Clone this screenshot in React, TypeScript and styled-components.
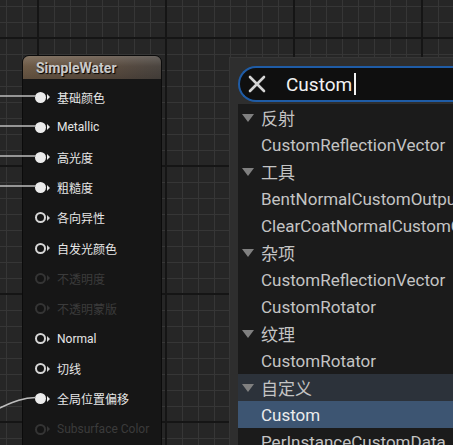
import React from "react";
import styled, { createGlobalStyle, css } from "styled-components";

const Global = createGlobalStyle`
  html, body { margin: 0; padding: 0; background: #262626; }
  body { width: 453px; height: 445px; overflow: hidden; font-family: Roboto, "Noto Sans CJK SC", sans-serif; }
  #root { width: 453px; height: 445px; }
`;

const Canvas = styled.div`
  position: relative;
  width: 453px;
  height: 445px;
  overflow: hidden;
  background-color: #262626;
  background-image:
    linear-gradient(to right, #151515 2px, transparent 2px),
    linear-gradient(to bottom, #151515 2px, transparent 2px),
    linear-gradient(to right, #363636 1px, transparent 1px),
    linear-gradient(to bottom, #363636 1px, transparent 1px);
  background-size: 128px 128px, 128px 128px, 16px 16px, 16px 16px;
  background-position: 37px 37px, 37px 37px, 6px 6px, 6px 6px;
`;

const Node = styled.div`
  position: absolute;
  left: 22px;
  top: 55px;
  width: 140px;
  height: 420px;
  display: flex;
  flex-direction: column;
  border-radius: 7px 7px 0 0;
  background: #161616;
  border: 1px solid #0b0b0b;
  box-sizing: border-box;
  overflow: hidden;
`;

const NodeHeader = styled.div`
  height: 23px;
  display: flex;
  align-items: center;
  padding-left: 13px;
  font-family: Roboto, sans-serif;
  font-weight: 700;
  font-size: 14px;
  color: #c9c9c9;
  text-shadow: 1px 1px 1px #000;
  background:
    linear-gradient(180deg, rgba(255, 255, 255, 0.16) 0%, rgba(255, 255, 255, 0) 45%, rgba(0, 0, 0, 0.15) 100%),
    linear-gradient(90deg, #6e5b47 0%, #5f4f41 55%, #4b4540 100%);
`;

const PinList = styled.div`
  display: flex;
  flex-direction: column;
  padding-top: 3px;
`;

type PinState = "connected" | "open" | "disabled";

const PinRow = styled.div`
  height: 30.2px;
  display: flex;
  align-items: center;
  padding-left: 12px;
`;

const PinDot = styled.span<{ $state: PinState }>`
  position: relative;
  width: 11px;
  height: 11px;
  box-sizing: border-box;
  border-radius: 50%;
  flex: none;
  ${(p) =>
    p.$state === "connected"
      ? css`background: #ececec;`
      : p.$state === "open"
      ? css`border: 2px solid #d6d6d6; background: #141414;`
      : css`border: 2px solid #343434; background: #141414;`}
  &::after {
    content: "";
    position: absolute;
    left: ${(p) => (p.$state === "connected" ? "12px" : "10px")};
    top: 50%;
    margin-top: -3px;
    border-left: 3px solid ${(p) => (p.$state === "disabled" ? "#343434" : p.$state === "open" ? "#d6d6d6" : "#ececec")};
    border-top: 3px solid transparent;
    border-bottom: 3px solid transparent;
  }
`;

const PinLabel = styled.span<{ $state: PinState }>`
  margin-left: 11px;
  font-family: Roboto, "Noto Sans CJK SC", sans-serif;
  font-size: 12px;
  white-space: nowrap;
  color: ${(p) => (p.$state === "disabled" ? "#3b3b3b" : "#e6e6e6")};
`;

const Wires = styled.svg`
  position: absolute;
  left: 0;
  top: 0;
  pointer-events: none;
`;

const Popup = styled.div`
  position: absolute;
  left: 229px;
  top: 57px;
  width: 240px;
  height: 400px;
  box-sizing: border-box;
  padding: 8px 0 0 8px;
  display: flex;
  flex-direction: column;
  gap: 2px;
  background: #2e2e2e;
  border: 1px solid #363636;
`;

const SearchBox = styled.div`
  height: 36px;
  box-sizing: border-box;
  display: flex;
  align-items: center;
  border: 2px solid #1f5ca6;
  border-right: none;
  border-radius: 18px 0 0 18px;
  background: #0f0f0f;
  padding-left: 8px;
`;

const ClearIcon = styled.svg`
  flex: none;
  width: 18px;
  height: 18px;
`;

const SearchText = styled.span`
  margin-left: 20px;
  font-family: Roboto, sans-serif;
  font-size: 19px;
  color: #f2f2f2;
`;

const Caret = styled.span`
  width: 2px;
  height: 22px;
  margin-left: 2px;
  background: #f2f2f2;
`;

const List = styled.div`
  flex: 1;
  display: flex;
  flex-direction: column;
  background: #1b1b1b;
  overflow: hidden;
`;

type RowKind = "cat" | "item";

const Row = styled.div<{ $hover?: boolean; $selected?: boolean }>`
  height: 27px;
  flex: none;
  display: flex;
  align-items: center;
  padding-left: 4px;
  white-space: nowrap;
  font-family: Roboto, "Noto Sans CJK SC", sans-serif;
  font-size: 17px;
  color: ${(p) => (p.$selected ? "#ececec" : "#c4c4c4")};
  background: ${(p) => (p.$selected ? "#3d5572" : p.$hover ? "#2c323a" : "transparent")};
`;

const Arrow = styled.span`
  width: 0;
  height: 0;
  margin-right: 7px;
  border-top: 8px solid #808080;
  border-left: 6.5px solid transparent;
  border-right: 6.5px solid transparent;
`;

const ItemText = styled.span<{ $kind: RowKind }>`
  padding-left: ${(p) => (p.$kind === "item" ? "19px" : "0")};
`;

const pins: { label: string; state: PinState }[] = [
  { label: "基础颜色", state: "connected" },
  { label: "Metallic", state: "connected" },
  { label: "高光度", state: "connected" },
  { label: "粗糙度", state: "connected" },
  { label: "各向异性", state: "open" },
  { label: "自发光颜色", state: "open" },
  { label: "不透明度", state: "disabled" },
  { label: "不透明蒙版", state: "disabled" },
  { label: "Normal", state: "open" },
  { label: "切线", state: "open" },
  { label: "全局位置偏移", state: "connected" },
  { label: "Subsurface Color", state: "disabled" },
];

const rows: { kind: RowKind; text: string; hover?: boolean; selected?: boolean }[] = [
  { kind: "cat", text: "反射" },
  { kind: "item", text: "CustomReflectionVector" },
  { kind: "cat", text: "工具" },
  { kind: "item", text: "BentNormalCustomOutput" },
  { kind: "item", text: "ClearCoatNormalCustomOutput" },
  { kind: "cat", text: "杂项" },
  { kind: "item", text: "CustomReflectionVector" },
  { kind: "item", text: "CustomRotator" },
  { kind: "cat", text: "纹理" },
  { kind: "item", text: "CustomRotator" },
  { kind: "cat", text: "自定义", hover: true },
  { kind: "item", text: "Custom", selected: true },
  { kind: "item", text: "PerInstanceCustomData" },
];

export default function App() {
  return (
    <>
      <Global />
      <Canvas>
        <Node>
          <NodeHeader>SimpleWater</NodeHeader>
          <PinList>
            {pins.map((p, i) => (
              <PinRow key={i}>
                <PinDot $state={p.state} />
                <PinLabel $state={p.state}>{p.label}</PinLabel>
              </PinRow>
            ))}
          </PinList>
        </Node>
        <Wires width="60" height="445" viewBox="0 0 60 445">
          {[96, 126, 156, 186].map((y) => (
            <line key={y} x1="0" y1={y} x2="36" y2={y} stroke="#bdbdbd" strokeWidth="1.6" />
          ))}
          <path d="M -10 412 C 10 404, 18 398, 36 397.5" fill="none" stroke="#bdbdbd" strokeWidth="1.6" />
        </Wires>
        <Popup>
          <SearchBox>
            <ClearIcon viewBox="0 0 18 18">
              <path d="M2 2 L16 16 M16 2 L2 16" stroke="#d4d4d4" strokeWidth="2.6" strokeLinecap="round" />
            </ClearIcon>
            <SearchText>Custom</SearchText>
            <Caret />
          </SearchBox>
          <List>
            {rows.map((r, i) => (
              <Row key={i} $hover={r.hover} $selected={r.selected}>
                {r.kind === "cat" && <Arrow />}
                <ItemText $kind={r.kind}>{r.text}</ItemText>
              </Row>
            ))}
          </List>
        </Popup>
      </Canvas>
    </>
  );
}
